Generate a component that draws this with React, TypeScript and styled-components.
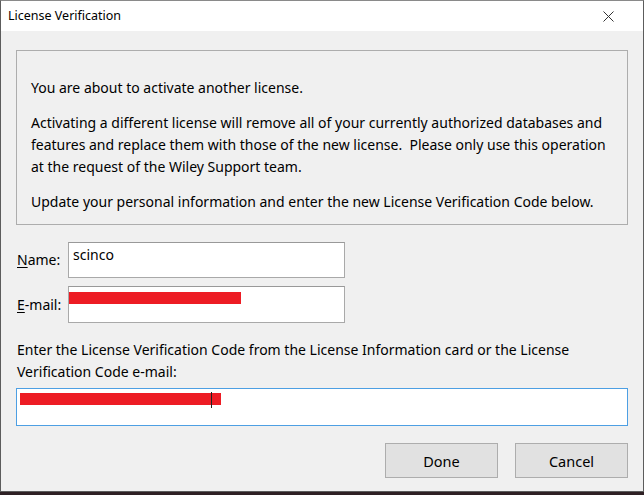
import React, { ReactElement } from 'react';
import styled, { createGlobalStyle } from 'styled-components';

const GlobalStyle = createGlobalStyle`
  html, body {
    margin: 0;
    padding: 0;
    background: #2e2024;
  }
  body {
    width: 644px;
    height: 495px;
    overflow: hidden;
  }
`;

const Window = styled.div`
  box-sizing: border-box;
  width: 644px;
  height: 492px;
  display: flex;
  flex-direction: column;
  background: #f0f0f0;
  border: 1px solid #5c5c5c;
  border-top-color: #8a8a8a;
  font-family: 'Noto Sans', 'Liberation Sans', sans-serif;
  font-size: 14px;
  line-height: 22px;
  color: #000;
`;

const TitleBar = styled.div`
  height: 30px;
  flex: none;
  display: flex;
  align-items: center;
  justify-content: space-between;
  background: #fff;
  padding: 0 29px 0 7px;
  font-size: 12.5px;
`;

const CloseButton = styled.span`
  display: flex;
  width: 11px;
  height: 11px;
`;

const Content = styled.div`
  flex: 1;
  display: flex;
  flex-direction: column;
  padding: 19px 15px 0 15px;
`;

const InfoBox = styled.div`
  border: 1px solid #adadad;
  padding: 26px 14px 11px 14px;
  display: flex;
  flex-direction: column;
  gap: 13px;
`;

const Para = styled.p`
  margin: 0;
  white-space: nowrap;
`;

const FormRows = styled.div`
  margin-top: 17px;
  display: flex;
  flex-direction: column;
  gap: 8px;
`;

const Row = styled.div`
  display: flex;
  align-items: center;
`;

const Label = styled.label`
  width: 52px;
  flex: none;
  padding-left: 1px;
  box-sizing: border-box;
`;

const Key = styled.span`
  text-decoration: underline;
  text-underline-offset: 2px;
`;

const Field = styled.div<{ $width?: number; $height?: number; $focused?: boolean }>`
  position: relative;
  box-sizing: border-box;
  width: ${(p) => (p.$width ? `${p.$width}px` : '100%')};
  height: ${(p) => p.$height ?? 36}px;
  background: #fff;
  border: 1px solid ${(p) => (p.$focused ? '#4d9fe3' : '#a9a9a9')};
  border-top-color: ${(p) => (p.$focused ? '#4d9fe3' : '#999')};
  padding: 1px 4px;
  color: #000;
`;

const Redaction = styled.span<{ $left: number; $top: number; $width: number }>`
  position: absolute;
  left: ${(p) => p.$left}px;
  top: ${(p) => p.$top}px;
  width: ${(p) => p.$width}px;
  height: 12px;
  background: #ed1c24;
`;

const Caret = styled.span<{ $left: number }>`
  position: absolute;
  left: ${(p) => p.$left}px;
  top: 3px;
  width: 1px;
  height: 16px;
  background: #222;
`;

const Instruction = styled.p`
  margin: 16px 0 5px 1px;
  white-space: nowrap;
`;

const Buttons = styled.div`
  display: flex;
  justify-content: flex-end;
  gap: 17px;
  margin-top: 17px;
`;

const Button = styled.button`
  box-sizing: border-box;
  width: 113px;
  height: 35px;
  background: #e1e1e1;
  border: 1px solid #adadad;
  font-family: inherit;
  font-size: 14.5px;
  color: #000;
  padding: 0;
`;

const App = (): ReactElement => (
  <>
    <GlobalStyle />
    <Window>
      <TitleBar>
        <span>License Verification</span>
        <CloseButton>
          <svg width="11" height="11" viewBox="0 0 11 11">
            <path d="M0.5 0.5 L10.5 10.5 M10.5 0.5 L0.5 10.5" stroke="#333" strokeWidth="1" fill="none" />
          </svg>
        </CloseButton>
      </TitleBar>
      <Content>
        <InfoBox>
          <Para>You are about to activate another license.</Para>
          <Para>
            Activating a different license will remove all of your currently authorized databases and
            <br />
            features and replace them with those of the new license.&nbsp; Please only use this operation
            <br />
            at the request of the Wiley Support team.
          </Para>
          <Para>Update your personal information and enter the new License Verification Code below.</Para>
        </InfoBox>

        <FormRows>
          <Row>
            <Label><Key>N</Key>ame:</Label>
            <Field $width={277}>scinco</Field>
          </Row>
          <Row>
            <Label><Key>E</Key>-mail:</Label>
            <Field $width={277} $height={37}>
              <Redaction $left={0} $top={5} $width={172} />
            </Field>
          </Row>
        </FormRows>

        <Instruction>
          Enter the License Verification Code from the License Information card or the License
          <br />
          Verification Code e-mail:
        </Instruction>
        <Field $height={38} $focused>
          <Redaction $left={3} $top={4} $width={201} />
          <Caret $left={194} />
        </Field>

        <Buttons>
          <Button>Done</Button>
          <Button>Cancel</Button>
        </Buttons>
      </Content>
    </Window>
  </>
);

export default App;
